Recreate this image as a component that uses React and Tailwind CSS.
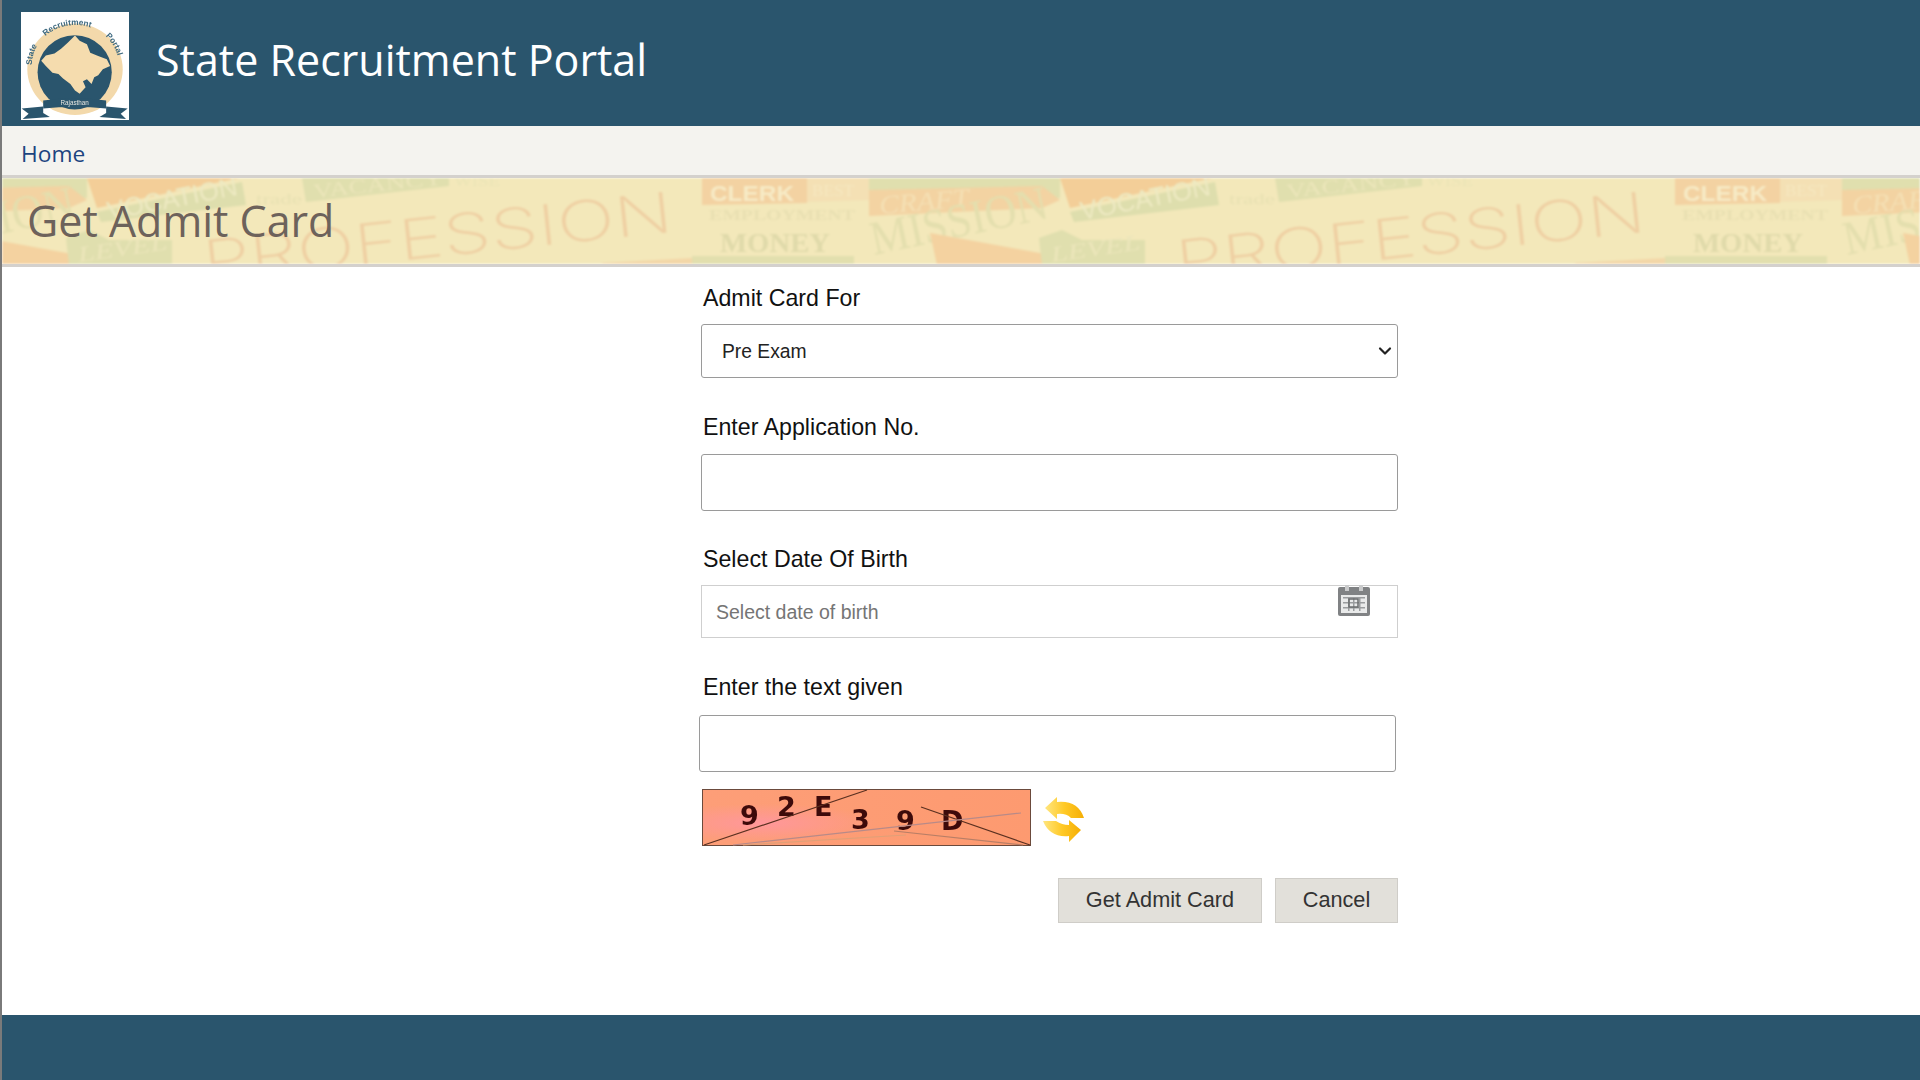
import { useState } from 'react';
import { ChevronDown } from 'lucide-react';

function Logo() {
  return (
    <svg viewBox="63 36 326 324" className="w-[108px] h-[108px] bg-white shrink-0 mt-[6px] blur-[0.3px]">
      <ellipse cx="226" cy="208" rx="144" ry="138" fill="#f3d9ab" />
      <circle cx="225" cy="217" r="112" fill="#2a556d" />
      <polygon
        fill="#f5dcae"
        points="226,106 240,122 262,132 272,158 296,168 322,178 332,198 310,208 296,226 284,232 276,252 262,238 250,244 258,262 240,282 226,272 212,252 190,236 176,222 158,218 138,198 124,182 138,166 164,160 184,146 204,128"
      />
      <path id="logoArc" d="M96 195 A128 118 0 0 1 358 195" fill="none" />
      <text fontFamily="Liberation Sans, sans-serif" fontSize="25" fontWeight="700" fill="#3f6a80">
        <textPath href="#logoArc" startOffset="0%">State</textPath>
        <textPath href="#logoArc" startOffset="25%">Recruitment</textPath>
        <textPath href="#logoArc" startOffset="75%">Portal</textPath>
      </text>
      <path d="M130 302 Q225 288 320 302 L320 326 Q225 318 130 326 Z" fill="#2a556d" />
      <path d="M65 326 L130 320 L130 340 L150 352 L68 358 L86 342 Z" fill="#2a556d" />
      <path d="M385 326 L320 320 L320 340 L300 352 L380 358 L364 342 Z" fill="#2a556d" />
      <text x="225" y="316" textAnchor="middle" fontFamily="Liberation Sans, sans-serif" fontSize="19" fill="#e6e6e0">
        Rajasthan
      </text>
    </svg>
  );
}

// the collage behind the page title, one tile repeats every 973px
function BannerArt() {
  const serif = 'Liberation Serif, serif';
  const sans = 'Liberation Sans, sans-serif';
  const stretch = 'spacingAndGlyphs';
  return (
    <svg className="absolute inset-0 w-full h-full blur-[1px]">
      <defs>
        <pattern id="collage" width="973" height="87" patternUnits="userSpaceOnUse" patternTransform="translate(-273 0)">
          <rect width="973" height="87" fill="#f3e8ba" />
          {/* clerk corner */}
          <polygon points="0,0 105,0 105,25 0,27" fill="#f3d2a2" />
          <polygon points="105,0 170,0 170,22 105,24" fill="#f4e0b4" />
          <text x="8" y="23" fontFamily={sans} fontWeight="700" fontSize="22" fill="#f7ebc6" textLength="84" lengthAdjust={stretch}>CLERK</text>
          <text x="110" y="18" fontFamily={serif} fontSize="16" fill="#f6e8c0" textLength="42" lengthAdjust={stretch}>BEST</text>
          <text x="7" y="42" fontFamily={serif} fontWeight="700" fontSize="14" fill="#e9e0b2" textLength="146" lengthAdjust={stretch}>EMPLOYMENT</text>
          <text x="18" y="74" fontFamily={serif} fontWeight="700" fontSize="27" fill="#e0daaa" textLength="110" lengthAdjust={stretch}>MONEY</text>
          <polygon points="-10,78 152,78 152,87 -10,87" fill="#e2dfae" />
          <polygon points="873,85 963,80 963,87 873,87" fill="#f3d7a8" />
          <polygon points="963,78 973,78 973,87 963,87" fill="#e2dfae" />
          {/* craft + mission */}
          <polygon points="167,0 358,0 358,20 167,12" fill="#e0dfae" />
          <polygon points="167,12 340,8 358,22 340,30 167,38" fill="#f3d3a2" />
          <text x="0" y="0" transform="translate(178 36) rotate(-5)" fontFamily={serif} fontStyle="italic" fontSize="26" fill="#f5e0b4" textLength="90" lengthAdjust={stretch}>CRAFT</text>
          <text x="0" y="0" transform="translate(172 77) rotate(-12)" fontFamily={serif} fontSize="48" fill="#e4dfae" textLength="180" lengthAdjust={stretch}>MISSION</text>
          {/* lower orange wedge + level */}
          <polygon points="228,55 387,84 387,87 235,87" fill="#f4d2a0" />
          <polygon points="337,60 360,52 380,62 443,62 443,87 340,87" fill="#e0dfae" />
          <text x="0" y="0" transform="translate(350 84) rotate(-8)" fontFamily={serif} fontStyle="italic" fontSize="22" fill="#ece6ba" textLength="90" lengthAdjust={stretch}>LEVEL</text>
          {/* vocation */}
          <polygon points="358,0 510,0 368,30" fill="#f3ce98" />
          <polygon points="368,34 513,4 517,27 372,44" fill="#dedead" />
          <text x="0" y="0" transform="translate(380 42) rotate(-11)" fontFamily={sans} fontSize="26" fill="#eeeac2" textLength="132" lengthAdjust={stretch}>VOCATION</text>
          <text x="527" y="26" fontFamily={serif} fontSize="14" fill="#e8e1b2" textLength="46" lengthAdjust={stretch}>trade</text>
          {/* vacancy */}
          <polygon points="573,0 720,0 720,8 577,24" fill="#e0dfae" />
          <text x="0" y="0" transform="translate(585 20) rotate(-6)" fontFamily={serif} fontSize="20" fill="#ece6ba" textLength="130" lengthAdjust={stretch}>VACANCY</text>
          <text x="725" y="8" fontFamily={serif} fontSize="14" fill="#ebe5b6" textLength="46" lengthAdjust={stretch}>WISE</text>
          {/* profession */}
          <text x="0" y="0" transform="translate(476 103) rotate(-6)" fontFamily="Inter, sans-serif" fontWeight="200" fontSize="56" fill="#efcfa2" textLength="472" lengthAdjust={stretch}>PROFESSION</text>
        </pattern>
      </defs>
      <rect width="100%" height="100%" fill="url(#collage)" />
    </svg>
  );
}

function Captcha() {
  const font = 'DejaVu Sans, sans-serif';
  const glyphs = [
    ['9', 38, 36],
    ['2', 75, 27],
    ['E', 112, 27],
    ['3', 149, 40],
    ['9', 194, 41],
    ['D', 239, 41],
  ];
  return (
    <svg viewBox="0 0 329 57" className="w-[329px] h-[57px] shrink-0 blur-[0.3px]">
      <defs>
        <linearGradient id="captchaBg" x1="0" y1="0" x2="1" y2="0">
          <stop offset="0" stopColor="#fd9e78" />
          <stop offset="1" stopColor="#fd9a70" />
        </linearGradient>
        <radialGradient id="captchaPink" cx="0.18" cy="0.6" r="0.35">
          <stop offset="0" stopColor="#ff979b" />
          <stop offset="1" stopColor="#ff979b" stopOpacity="0" />
        </radialGradient>
      </defs>
      <rect x="0.5" y="0.5" width="328" height="56" fill="url(#captchaBg)" stroke="#6b4a3c" />
      <rect x="1" y="1" width="327" height="55" fill="url(#captchaPink)" />
      {glyphs.map(([c, x, y], i) => (
        <text key={i} x={x} y={y} fontFamily={font} fontWeight="700" fontSize="27" fill="#3d0a0a">{c}</text>
      ))}
      <g fill="none" strokeWidth="1.2">
        <line x1="2" y1="56" x2="165" y2="1" stroke="#5a3020" />
        <line x1="219" y1="18" x2="328" y2="56" stroke="#5a3020" />
        <line x1="31" y1="56" x2="319" y2="24" stroke="#b88a88" />
        <line x1="192" y1="42" x2="321" y2="56" stroke="#b87e66" />
        <line x1="41" y1="56" x2="204" y2="46" stroke="#e0a078" />
      </g>
    </svg>
  );
}

function RefreshIcon() {
  return (
    <svg viewBox="0 0 42 46" className="w-[42px] h-[46px] shrink-0 mt-[4px]">
      <defs>
        <linearGradient id="arrowFill" x1="0" y1="0" x2="1" y2="0">
          <stop offset="0" stopColor="#ffe680" />
          <stop offset="0.5" stopColor="#ffc926" />
          <stop offset="1" stopColor="#f5ae05" />
        </linearGradient>
      </defs>
      <path d="M3 11 L15 0 L15 5 Q36 3 42 21 L29 21 Q24 16 15 17 L15 22 Z" fill="url(#arrowFill)" />
      <path d="M1 24 L14 24 Q20 28 27 28 L27 23 L39 33 L27 45 L27 39 Q8 41 1 24 Z" fill="url(#arrowFill)" />
    </svg>
  );
}

function CalendarIcon() {
  return (
    <svg viewBox="0 0 32 32" className="absolute right-[28px] top-0 w-[32px] h-[32px] blur-[0.5px]">
      <path d="M2 2 H30 Q32 2 32 4 V29 Q32 31 30 31 H2 Q0 31 0 29 V4 Q0 2 2 2 Z" fill="#808284" />
      <rect x="3" y="10" width="26" height="18" fill="#e9eaea" />
      <rect x="7" y="0" width="4" height="6" fill="#c9cacb" />
      <rect x="21" y="0" width="4" height="6" fill="#c9cacb" />
      <g fill="#9a9c9e">
        <rect x="5" y="12" width="22" height="1.5" />
        <rect x="5" y="17" width="22" height="1.5" />
        <rect x="5" y="22" width="22" height="1.5" />
        <rect x="10" y="12" width="1.5" height="14" />
        <rect x="15" y="12" width="1.5" height="14" />
        <rect x="21" y="12" width="1.5" height="14" />
      </g>
      <rect x="11" y="14" width="9" height="8" fill="none" stroke="#6a6c6e" strokeWidth="1.5" />
    </svg>
  );
}

function Field({ label, mt, gap = 'mb-[13px]', children }) {
  return (
    <div className={mt}>
      <label className={`block pl-[2px] text-[23.2px] leading-[26px] text-[#111] ${gap}`}>{label}</label>
      {children}
    </div>
  );
}

export default function App() {
  const [exam, setExam] = useState('pre');
  const [appNo, setAppNo] = useState('');
  const [dob, setDob] = useState('');
  const [captcha, setCaptcha] = useState('');

  return (
    <div className="h-screen overflow-hidden flex flex-col border-l-2 border-[#7a7a7a] bg-white font-['Liberation_Sans',sans-serif]">
      <header className="h-[126px] shrink-0 bg-[#2a556d] flex items-center pl-[19px] gap-[27px]">
        <Logo />
        <h1 className="font-['Open_Sans',sans-serif] text-[43px] leading-none text-white -mt-[7px]">State Recruitment Portal</h1>
      </header>

      <nav className="h-[49px] shrink-0 bg-[#f4f3ef] flex items-center pl-[19px]">
        <a href="#" className="font-['Open_Sans',sans-serif] text-[22.7px] text-[#1c4480] mt-[8px]">Home</a>
      </nav>

      <div className="relative h-[92px] shrink-0 border-y-[3px] border-[#d4d1cd] flex items-center pl-[25px] overflow-hidden">
        <BannerArt />
        <h2 className="relative font-['Open_Sans',sans-serif] text-[43px] leading-none text-[#6d625b] -mt-[1px]">Get Admit Card</h2>
      </div>

      <main className="flex-1 pt-[18px] pl-[699px]">
        <div className="w-[697px]">
          <Field label="Admit Card For">
            <div className="relative">
              <select
                value={exam}
                onChange={(e) => setExam(e.target.value)}
                className="block w-full h-[54px] pl-[20px] pt-[3px] appearance-none bg-white border border-[#9a9a9a] rounded-[3px] text-[19.3px] text-[#222]"
              >
                <option value="pre">Pre Exam</option>
                <option value="main">Main Exam</option>
              </select>
              <ChevronDown className="absolute right-[3px] top-[17px] w-[20px] h-[20px] text-[#222] pointer-events-none" strokeWidth={2.6} />
            </div>
          </Field>

          <Field label="Enter Application No." mt="mt-[36px]" gap="mb-[14px]">
            <input
              type="text"
              value={appNo}
              onChange={(e) => setAppNo(e.target.value)}
              className="block w-full h-[57px] px-4 bg-white border border-[#9a9a9a] rounded-[3px] text-[19px] outline-none"
            />
          </Field>

          <Field label="Select Date Of Birth" mt="mt-[35px]">
            <div className="relative">
              <input
                type="text"
                value={dob}
                onChange={(e) => setDob(e.target.value)}
                placeholder="Select date of birth"
                className="block w-full h-[53px] px-[14px] pt-[2px] bg-white border border-[#cfcfcf] text-[19.5px] placeholder:text-[#757575] outline-none"
              />
              <CalendarIcon />
            </div>
          </Field>

          <Field label="Enter the text given" mt="mt-[36px]" gap="mb-[15px]">
            <input
              type="text"
              value={captcha}
              onChange={(e) => setCaptcha(e.target.value)}
              className="block w-full h-[57px] -ml-[2px] px-4 bg-white border border-[#9a9a9a] rounded-[3px] text-[19px] outline-none"
            />
          </Field>

          <div className="mt-[17px] flex items-center gap-[11px] pl-[1px]">
            <Captcha />
            <RefreshIcon />
          </div>

          <div className="mt-[32px] flex justify-end gap-[13px]">
            <button className="w-[204px] h-[45px] bg-[#e2e0da] border border-[#cfcdc8] text-[21.7px] text-[#333]">Get Admit Card</button>
            <button className="w-[123px] h-[45px] bg-[#e2e0da] border border-[#cfcdc8] text-[21.7px] text-[#333]">Cancel</button>
          </div>
        </div>
      </main>

      <footer className="h-[65px] shrink-0 bg-[#2a556d]" />
    </div>
  );
}
